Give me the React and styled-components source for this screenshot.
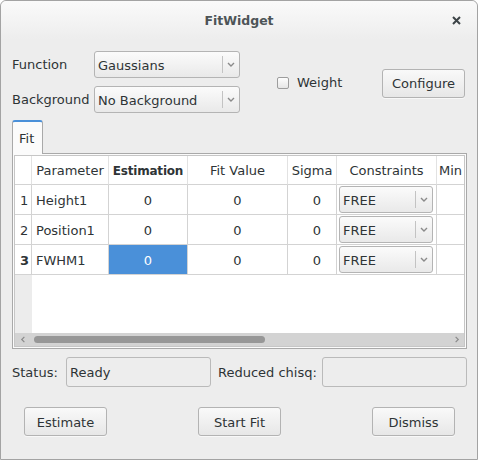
import React from 'react';
import styled, { createGlobalStyle } from 'styled-components';

const GlobalStyle = createGlobalStyle`
  html, body {
    margin: 0;
    padding: 0;
    background: #ffffff;
  }
  body {
    font-family: "DejaVu Sans", "Liberation Sans", sans-serif;
    font-size: 13px;
    color: #2e3436;
  }
`;

const Window = styled.div`
  width: 478px;
  height: 460px;
  box-sizing: border-box;
  border: 1px solid #a3a3a3;
  border-radius: 6px 6px 0 0;
  background: #ededed;
  display: flex;
  flex-direction: column;
  overflow: hidden;
`;

const TitleBar = styled.div`
  height: 38px;
  flex-shrink: 0;
  display: flex;
  align-items: center;
  justify-content: center;
  position: relative;
  background: linear-gradient(to bottom, #fafafa, #f1f1f1 70%, #ededed);
  border-radius: 5px 5px 0 0;
`;

const Title = styled.div`
  font-weight: bold;
  font-size: 12.5px;
  color: #4d5457;
  margin-top: 1px;
`;

const CloseButton = styled.div`
  position: absolute;
  right: 16px;
  top: 15px;
  width: 9px;
  height: 9px;
  display: flex;
`;

const Body = styled.div`
  flex: 1;
  display: flex;
  flex-direction: column;
  padding: 12px 10px 0 11px;
`;

const TopRow = styled.div`
  display: flex;
  align-items: center;
`;

const FormGrid = styled.div`
  display: grid;
  grid-template-columns: 82px 146px;
  grid-auto-rows: 27px;
  row-gap: 8px;
  align-items: center;
`;

const Label = styled.div`
  white-space: nowrap;
  line-height: 16px;
  margin-top: 1px;
`;

const Combo = styled.div`
  height: ${p => p.$height || 27}px;
  box-sizing: border-box;
  border: 1px solid #b4b4b4;
  border-radius: 3px;
  background: linear-gradient(to bottom, #fbfbfb, #e9e9e9);
  display: flex;
  align-items: center;
  white-space: nowrap;
`;

const ComboText = styled.div`
  flex: 1;
  padding-left: 3px;
  padding-top: 1px;
`;

const ComboDivider = styled.div`
  width: 1px;
  height: 17px;
  background: #c3c3c3;
`;

const ComboArrow = styled.div`
  width: 16px;
  display: flex;
  justify-content: center;
  align-items: center;
`;

const CheckRow = styled.label`
  display: flex;
  align-items: center;
  gap: 8px;
  margin-left: 37px;
  margin-top: 1px;
`;

const CheckBox = styled.span`
  width: 12px;
  height: 12px;
  box-sizing: border-box;
  border: 1px solid #9d9d9d;
  border-radius: 2px;
  background: linear-gradient(to bottom, #fdfdfd, #e6e6e6);
`;

const Button = styled.div`
  width: ${p => p.$width || 83}px;
  height: 29px;
  box-sizing: border-box;
  border: 1px solid #b3b3b3;
  border-radius: 3px;
  background: linear-gradient(to bottom, #f9f9f9, #e7e7e7);
  display: flex;
  align-items: center;
  justify-content: center;
  white-space: nowrap;
  padding-top: 1px;
  box-shadow: 0 1px 0 rgba(255, 255, 255, 0.6);
`;

const ConfigureButton = styled(Button)`
  margin-left: auto;
  margin-right: 2px;
  margin-top: 2px;
`;

const TabBar = styled.div`
  display: flex;
  margin-top: 7px;
`;

const Tab = styled.div`
  position: relative;
  z-index: 1;
  width: 31px;
  height: 34px;
  box-sizing: border-box;
  border: 1px solid #a9a9a9;
  border-top: 2px solid #4a90d9;
  border-bottom: none;
  border-radius: 3px 3px 0 0;
  background: #fbfbfb;
  margin-bottom: -1px;
  padding: 9px 0 0 6px;
`;

const Panel = styled.div`
  height: 196px;
  width: 455px;
  box-sizing: border-box;
  border: 1px solid #a9a9a9;
  background: #fbfbfb;
  padding: 1px;
  display: flex;
`;

const Frame = styled.div`
  flex: 1;
  border: 1px solid #c6c6c6;
  display: flex;
  flex-direction: column;
  overflow: hidden;
`;

const TableArea = styled.div`
  flex: 1;
  background: linear-gradient(to right, #ececec 17px, #ffffff 17px);
  overflow: hidden;
`;

const Grid = styled.div`
  display: grid;
  grid-template-columns: 17px 77px 79px 100px 49px 100px 80px;
  grid-template-rows: 29px repeat(3, 30px);
  width: max-content;
`;

const Cell = styled.div`
  box-sizing: border-box;
  border-right: 1px solid #d3d3d3;
  border-bottom: 1px solid #d3d3d3;
  background: ${p => (p.$selected ? '#4a90d9' : '#ffffff')};
  color: ${p => (p.$selected ? '#ffffff' : 'inherit')};
  display: flex;
  align-items: center;
  justify-content: ${p => p.$align || 'flex-start'};
  padding: ${p => p.$pad || '0 4px'};
  padding-top: 1px;
  white-space: nowrap;
  overflow: hidden;
  font-weight: ${p => (p.$bold ? 'bold' : 'normal')};
`;

const HeadCell = styled(Cell)`
  padding: 1px 2px 0;
  border-right-color: #e2e2e2;
  justify-content: ${p => p.$align || 'center'};
  font-size: ${p => (p.$bold ? '12px' : '13px')};
  letter-spacing: ${p => (p.$bold ? '-0.2px' : '0')};
`;

const ConstraintCell = styled(Cell)`
  padding: 0 3px 0 2px;
`;

const ConstraintCombo = styled(Combo)`
  flex: 1;
`;

const ScrollBar = styled.div`
  height: 13px;
  flex-shrink: 0;
  background: #d3d3d3;
  display: flex;
  align-items: center;
  padding: 0 4px 0 5px;
  gap: 7px;
`;

const ScrollTrack = styled.div`
  flex: 1;
  height: 7px;
  display: flex;
`;

const ScrollThumb = styled.div`
  height: 7px;
  border-radius: 4px;
  background: #979797;
`;

const StatusRow = styled.div`
  display: flex;
  align-items: center;
  margin-top: 8px;
  height: 30px;
`;

const StatusLabel = styled.div`
  width: ${p => p.$width}px;
  margin-left: ${p => p.$offset || 0}px;
  white-space: nowrap;
`;

const StatusField = styled.div`
  width: 145px;
  height: 30px;
  box-sizing: border-box;
  border: 1px solid #bababa;
  border-radius: 3px;
  background: #ededed;
  display: flex;
  align-items: center;
  padding-left: 3px;
`;

const ButtonRow = styled.div`
  display: flex;
  justify-content: space-between;
  margin-top: 20px;
  padding: 0 12px;
  width: 455px;
  box-sizing: border-box;
`;

const Chevron = ({ dir = 'down', size = 8, color = '#8a8a8a' }) => {
  const paths = {
    down: 'M1 2 L4 5 L7 2',
    left: 'M5 1 L2 4 L5 7',
    right: 'M3 1 L6 4 L3 7',
  };
  return (
    <svg width={size} height={size} viewBox="0 0 8 8">
      <path d={paths[dir]} fill="none" stroke={color} strokeWidth="1.4" />
    </svg>
  );
};

const ComboBox = ({ value, height }) => (
  <Combo $height={height}>
    <ComboText>{value}</ComboText>
    <ComboDivider />
    <ComboArrow>
      <Chevron />
    </ComboArrow>
  </Combo>
);

const params = [
  { id: 1, name: 'Height1' },
  { id: 2, name: 'Position1' },
  { id: 3, name: 'FWHM1', current: true },
];

const headers = ['Parameter', 'Estimation', 'Fit Value', 'Sigma', 'Constraints', 'Min'];

const App = () => {
  return (
    <>
      <GlobalStyle />
      <Window>
        <TitleBar>
          <Title>FitWidget</Title>
          <CloseButton>
            <svg width="9" height="9" viewBox="0 0 9 9">
              <path d="M1 1 L8 8 M8 1 L1 8" stroke="#3d4447" strokeWidth="2" />
            </svg>
          </CloseButton>
        </TitleBar>
        <Body>
          <TopRow>
            <FormGrid>
              <Label>Function</Label>
              <ComboBox value="Gaussians" />
              <Label>Background</Label>
              <ComboBox value="No Background" />
            </FormGrid>
            <CheckRow>
              <CheckBox />
              <span>Weight</span>
            </CheckRow>
            <ConfigureButton>Configure</ConfigureButton>
          </TopRow>

          <TabBar>
            <Tab>Fit</Tab>
          </TabBar>
          <Panel>
            <Frame>
              <TableArea>
                <Grid>
                  <HeadCell />
                  {headers.map(h => (
                    <HeadCell key={h} $bold={h === 'Estimation'} $align={h === 'Min' ? 'flex-start' : 'center'}>
                      {h}
                    </HeadCell>
                  ))}
                  {params.map(p => (
                    <React.Fragment key={p.id}>
                      <Cell $bold={p.current} $pad="0 0 0 5px">{p.id}</Cell>
                      <Cell>{p.name}</Cell>
                      <Cell $align="center" $selected={p.current}>0</Cell>
                      <Cell $align="center">0</Cell>
                      <Cell $align="flex-end" $pad="0 15px 0 0">0</Cell>
                      <ConstraintCell>
                        <ConstraintCombo $height={27}>
                          <ComboText>FREE</ComboText>
                          <ComboDivider />
                          <ComboArrow>
                            <Chevron />
                          </ComboArrow>
                        </ConstraintCombo>
                      </ConstraintCell>
                      <Cell />
                    </React.Fragment>
                  ))}
                </Grid>
              </TableArea>
              <ScrollBar>
                <Chevron dir="left" size={7} color="#8c8c8c" />
                <ScrollTrack>
                  <ScrollThumb style={{ width: '56%' }} />
                </ScrollTrack>
                <Chevron dir="right" size={7} color="#8c8c8c" />
              </ScrollBar>
            </Frame>
          </Panel>

          <StatusRow>
            <StatusLabel $width={54}>Status:</StatusLabel>
            <StatusField>Ready</StatusField>
            <StatusLabel $width={104} $offset={7}>Reduced chisq:</StatusLabel>
            <StatusField />
          </StatusRow>

          <ButtonRow>
            <Button>Estimate</Button>
            <Button>Start Fit</Button>
            <Button>Dismiss</Button>
          </ButtonRow>
        </Body>
      </Window>
    </>
  );
};

export default App;
